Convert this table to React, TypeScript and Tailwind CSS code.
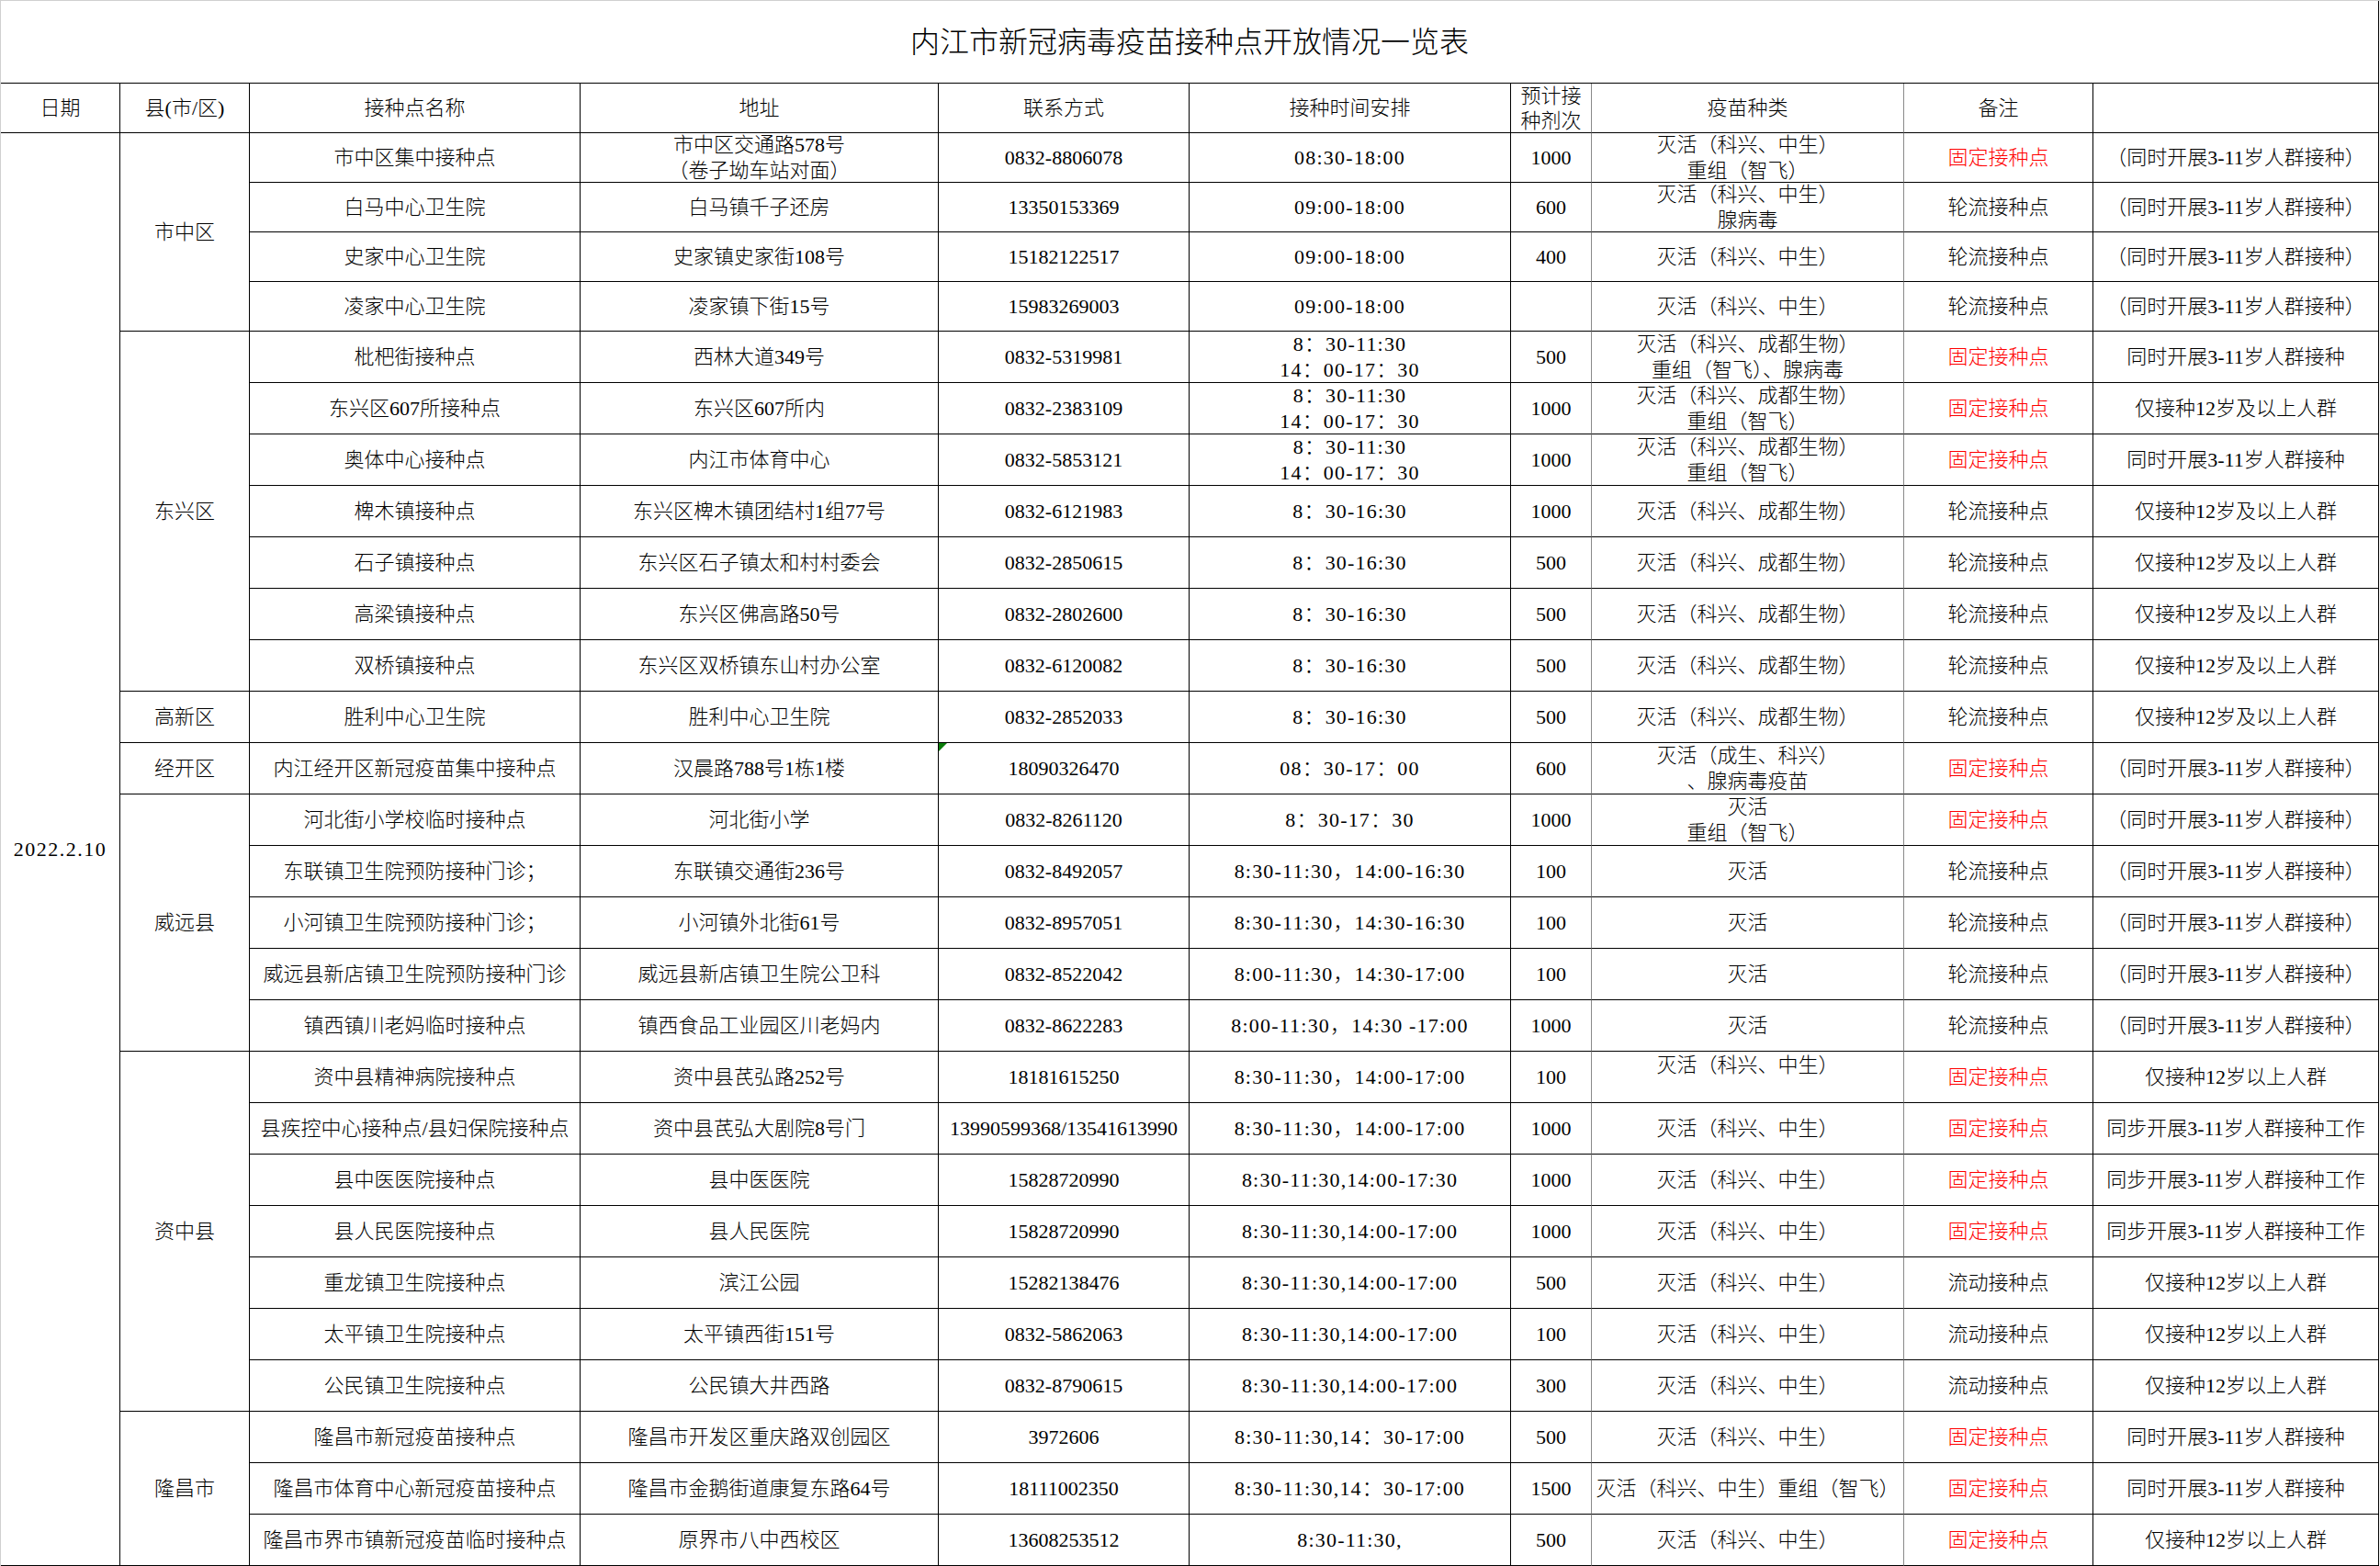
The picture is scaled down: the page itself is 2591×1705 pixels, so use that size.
import React from 'react';

type Row = {
  name: string;
  addr: string[];
  tel: string;
  time: string[];
  dose: string;
  vac: string[];
  note: string;
  fixed?: boolean;
  vacTop?: boolean;
  mark?: boolean;
};

type Group = { district: string; span: string; rows: Row[] };

const NOTE_A = '（同时开展3-11岁人群接种）';
const NOTE_B = '同时开展3-11岁人群接种';
const NOTE_C = '仅接种12岁及以上人群';
const NOTE_D = '仅接种12岁以上人群';
const NOTE_E = '同步开展3-11岁人群接种工作';

const KX = '灭活（科兴、中生）';
const CD = '灭活（科兴、成都生物）';
const T1 = ['8：30-11:30', '14：00-17：30'];

const groups: Group[] = [
  {
    district: '市中区',
    span: 'row-span-4',
    rows: [
      { name: '市中区集中接种点', addr: ['市中区交通路578号', '（卷子坳车站对面）'], tel: '0832-8806078', time: ['08:30-18:00'], dose: '1000', vac: [KX, '重组（智飞）'], note: NOTE_A, fixed: true },
      { name: '白马中心卫生院', addr: ['白马镇千子还房'], tel: '13350153369', time: ['09:00-18:00'], dose: '600', vac: [KX, '腺病毒'], note: NOTE_A },
      { name: '史家中心卫生院', addr: ['史家镇史家街108号'], tel: '15182122517', time: ['09:00-18:00'], dose: '400', vac: [KX], note: NOTE_A },
      { name: '凌家中心卫生院', addr: ['凌家镇下街15号'], tel: '15983269003', time: ['09:00-18:00'], dose: '', vac: [KX], note: NOTE_A },
    ],
  },
  {
    district: '东兴区',
    span: 'row-span-7',
    rows: [
      { name: '枇杷街接种点', addr: ['西林大道349号'], tel: '0832-5319981', time: T1, dose: '500', vac: [CD, '重组（智飞）、腺病毒'], note: NOTE_B, fixed: true },
      { name: '东兴区607所接种点', addr: ['东兴区607所内'], tel: '0832-2383109', time: T1, dose: '1000', vac: [CD, '重组（智飞）'], note: NOTE_C, fixed: true },
      { name: '奥体中心接种点', addr: ['内江市体育中心'], tel: '0832-5853121', time: T1, dose: '1000', vac: [CD, '重组（智飞）'], note: NOTE_B, fixed: true },
      { name: '椑木镇接种点', addr: ['东兴区椑木镇团结村1组77号'], tel: '0832-6121983', time: ['8：30-16:30'], dose: '1000', vac: [CD], note: NOTE_C },
      { name: '石子镇接种点', addr: ['东兴区石子镇太和村村委会'], tel: '0832-2850615', time: ['8：30-16:30'], dose: '500', vac: [CD], note: NOTE_C },
      { name: '高梁镇接种点', addr: ['东兴区佛高路50号'], tel: '0832-2802600', time: ['8：30-16:30'], dose: '500', vac: [CD], note: NOTE_C },
      { name: '双桥镇接种点', addr: ['东兴区双桥镇东山村办公室'], tel: '0832-6120082', time: ['8：30-16:30'], dose: '500', vac: [CD], note: NOTE_C },
    ],
  },
  {
    district: '高新区',
    span: 'row-span-1',
    rows: [
      { name: '胜利中心卫生院', addr: ['胜利中心卫生院'], tel: '0832-2852033', time: ['8：30-16:30'], dose: '500', vac: [CD], note: NOTE_C },
    ],
  },
  {
    district: '经开区',
    span: 'row-span-1',
    rows: [
      { name: '内江经开区新冠疫苗集中接种点', addr: ['汉晨路788号1栋1楼'], tel: '18090326470', time: ['08：30-17：00'], dose: '600', vac: ['灭活（成生、科兴）', '、腺病毒疫苗'], note: NOTE_A, fixed: true, mark: true },
    ],
  },
  {
    district: '威远县',
    span: 'row-span-5',
    rows: [
      { name: '河北街小学校临时接种点', addr: ['河北街小学'], tel: '0832-8261120', time: ['8：30-17：30'], dose: '1000', vac: ['灭活', '重组（智飞）'], note: NOTE_A, fixed: true },
      { name: '东联镇卫生院预防接种门诊；', addr: ['东联镇交通街236号'], tel: '0832-8492057', time: ['8:30-11:30，14:00-16:30'], dose: '100', vac: ['灭活'], note: NOTE_A },
      { name: '小河镇卫生院预防接种门诊；', addr: ['小河镇外北街61号'], tel: '0832-8957051', time: ['8:30-11:30，14:30-16:30'], dose: '100', vac: ['灭活'], note: NOTE_A },
      { name: '威远县新店镇卫生院预防接种门诊', addr: ['威远县新店镇卫生院公卫科'], tel: '0832-8522042', time: ['8:00-11:30，14:30-17:00'], dose: '100', vac: ['灭活'], note: NOTE_A },
      { name: '镇西镇川老妈临时接种点', addr: ['镇西食品工业园区川老妈内'], tel: '0832-8622283', time: ['8:00-11:30，14:30 -17:00'], dose: '1000', vac: ['灭活'], note: NOTE_A },
    ],
  },
  {
    district: '资中县',
    span: 'row-span-7',
    rows: [
      { name: '资中县精神病院接种点', addr: ['资中县芪弘路252号'], tel: '18181615250', time: ['8:30-11:30，14:00-17:00'], dose: '100', vac: [KX], note: NOTE_D, fixed: true, vacTop: true },
      { name: '县疾控中心接种点/县妇保院接种点', addr: ['资中县芪弘大剧院8号门'], tel: '13990599368/13541613990', time: ['8:30-11:30，14:00-17:00'], dose: '1000', vac: [KX], note: NOTE_E, fixed: true },
      { name: '县中医医院接种点', addr: ['县中医医院'], tel: '15828720990', time: ['8:30-11:30,14:00-17:30'], dose: '1000', vac: [KX], note: NOTE_E, fixed: true },
      { name: '县人民医院接种点', addr: ['县人民医院'], tel: '15828720990', time: ['8:30-11:30,14:00-17:00'], dose: '1000', vac: [KX], note: NOTE_E, fixed: true },
      { name: '重龙镇卫生院接种点', addr: ['滨江公园'], tel: '15282138476', time: ['8:30-11:30,14:00-17:00'], dose: '500', vac: [KX], note: NOTE_D },
      { name: '太平镇卫生院接种点', addr: ['太平镇西街151号'], tel: '0832-5862063', time: ['8:30-11:30,14:00-17:00'], dose: '100', vac: [KX], note: NOTE_D },
      { name: '公民镇卫生院接种点', addr: ['公民镇大井西路'], tel: '0832-8790615', time: ['8:30-11:30,14:00-17:00'], dose: '300', vac: [KX], note: NOTE_D },
    ],
  },
  {
    district: '隆昌市',
    span: 'row-span-3',
    rows: [
      { name: '隆昌市新冠疫苗接种点', addr: ['隆昌市开发区重庆路双创园区'], tel: '3972606', time: ['8:30-11:30,14：30-17:00'], dose: '500', vac: [KX], note: NOTE_B, fixed: true },
      { name: '隆昌市体育中心新冠疫苗接种点', addr: ['隆昌市金鹅街道康复东路64号'], tel: '18111002350', time: ['8:30-11:30,14：30-17:00'], dose: '1500', vac: ['灭活（科兴、中生）重组（智飞）'], note: NOTE_B, fixed: true },
      { name: '隆昌市界市镇新冠疫苗临时接种点', addr: ['原界市八中西校区'], tel: '13608253512', time: ['8:30-11:30,'], dose: '500', vac: [KX], note: NOTE_D, fixed: true },
    ],
  },
];

const Cell = ({
  lines,
  className = '',
  edge = 'border-r-black',
  children,
}: {
  lines: string[];
  className?: string;
  edge?: string;
  children?: React.ReactNode;
}) => (
  <div
    className={`relative flex flex-col items-center border-b border-r border-b-black ${edge} text-center leading-7 whitespace-nowrap ${className.includes('justify-start') ? '' : 'justify-center'} ${className}`}
  >
    {children}
    {lines.map((l, i) => (
      <span key={i}>{l}</span>
    ))}
  </div>
);

const thin = 'border-r-[#8a8a8a]';

export default function App() {
  return (
    <div className="w-[2591px] h-[1705px] bg-white text-black font-['Liberation_Serif','Noto_Sans_CJK_SC',serif] font-light text-[22px]">
      <div className="grid grid-cols-[130px_141px_360px_390px_273px_350px_88px_340px_206px_311px] grid-rows-[90px_54px_repeat(4,54px)_repeat(24,56px)] border-t border-l border-[#d0d0d0]">
        {/* title */}
        <div className="col-span-10 flex items-center justify-center border-b border-r border-black text-[32px]">
          内江市新冠病毒疫苗接种点开放情况一览表
        </div>

        {/* header */}
        <Cell lines={['日期']} />
        <Cell lines={['县(市/区)']} />
        <Cell lines={['接种点名称']} />
        <Cell lines={['地址']} />
        <Cell lines={['联系方式']} />
        <Cell lines={['接种时间安排']} />
        <Cell lines={['预计接', '种剂次']} edge={thin} className="leading-[27px]" />
        <Cell lines={['疫苗种类']} edge={thin} />
        <Cell lines={['备注']} />
        <Cell lines={[]} />

        {/* body */}
        <Cell lines={['2022.2.10']} className="row-span-28 tracking-[1.5px]" />
        {groups.map((g) => (
          <React.Fragment key={g.district}>
            <Cell lines={[g.district]} className={g.span} />
            {g.rows.map((r) => (
              <React.Fragment key={r.name}>
                <Cell lines={[r.name]} className="col-start-3" />
                <Cell lines={r.addr} />
                <Cell lines={[r.tel]}>
                  {r.mark && (
                    <svg className="absolute left-0 top-0" width="9" height="9" viewBox="0 0 9 9">
                      <polygon points="0,0 9,0 0,9" fill="#0a7d0a" />
                    </svg>
                  )}
                </Cell>
                <Cell lines={r.time} className="tracking-[1.2px]" />
                <Cell lines={[r.dose]} edge={thin} />
                <Cell lines={r.vac} edge={thin} className={r.vacTop ? 'justify-start pt-[1px]' : ''} />
                <Cell
                  lines={[r.fixed ? '固定接种点' : r.note === NOTE_D && g.district === '资中县' ? '流动接种点' : '轮流接种点']}
                  className={r.fixed ? 'text-[#ff0000]' : ''}
                />
                <Cell lines={[r.note]} />
              </React.Fragment>
            ))}
          </React.Fragment>
        ))}
      </div>
    </div>
  );
}
